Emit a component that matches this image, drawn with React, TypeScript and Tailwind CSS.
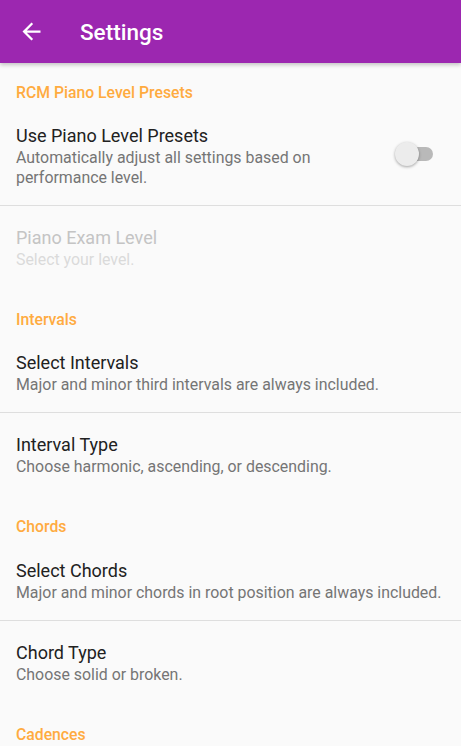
import React from "react";

function Category({ label, first }: { label: string; first?: boolean }) {
  return (
    <div className={`${first ? "pt-[21px] pb-[1px]" : "pt-[24px] pb-[2px]"} pl-[16px]`}>
      <div className="text-[15.75px] leading-[18.5px] font-medium text-[#ffab40]">{label}</div>
    </div>
  );
}

function Item({
  title,
  summary,
  disabled,
  right,
}: {
  title: string;
  summary: React.ReactNode;
  disabled?: boolean;
  right?: React.ReactNode;
}) {
  return (
    <div className="flex items-center min-h-[81px] pl-[16px] pr-[16px] pt-[21px] pb-[17px]">
      <div className="flex-1 min-w-0">
        <div className={`text-[18px] leading-[21px] ${disabled ? "text-[#c4c4c4]" : "text-[#212121]"}`}>{title}</div>
        <div className={`mt-[2px] text-[15.9px] leading-[20px] whitespace-nowrap ${disabled ? "text-[#dadada]" : "text-[#757575]"}`}>{summary}</div>
      </div>
      {right}
    </div>
  );
}

function Divider() {
  return <div className="h-px bg-[#dedede]" />;
}

function Switch() {
  return (
    <div className="relative ml-[16px] mr-[12px] w-[38px] h-[24px] shrink-0 -mt-[4px]">
      <div className="absolute left-[1px] right-0 top-[5px] h-[14px] rounded-full bg-[#b9b9b9]" />
      <div className="absolute left-0 top-0 w-[24px] h-[24px] rounded-full bg-[#ececec] shadow-[0_1px_3px_rgba(0,0,0,0.35)]" />
    </div>
  );
}

export default function App() {
  return (
    <div
      className="w-[461px] h-[746px] overflow-hidden bg-[#fafafa] flex flex-col"
      style={{ fontFamily: "Roboto, 'Noto Sans', sans-serif" }}
    >
      <div className="relative z-10 h-[63px] shrink-0 bg-[#9c27b0] flex items-center pl-[18px] shadow-[0_2px_4px_rgba(0,0,0,0.22)]">
        <svg width="27" height="27" viewBox="0 0 24 24" fill="#ffffff">
          <path d="M20 11H7.83l5.59-5.59L12 4l-8 8 8 8 1.41-1.41L7.83 13H20v-2z" />
        </svg>
        <div className="ml-[35px] mt-[2px] text-[22.5px] font-medium text-white leading-none">Settings</div>
      </div>
      <div className="flex flex-col">
        <Category label="RCM Piano Level Presets" first />
        <Item
          title="Use Piano Level Presets"
          summary={
            <>
              Automatically adjust all settings based on
              <br />
              performance level.
            </>
          }
          right={<Switch />}
        />
        <Divider />
        <Item title="Piano Exam Level" summary="Select your level." disabled />
        <Category label="Intervals" />
        <Item title="Select Intervals" summary="Major and minor third intervals are always included." />
        <Divider />
        <Item title="Interval Type" summary="Choose harmonic, ascending, or descending." />
        <Category label="Chords" />
        <Item title="Select Chords" summary="Major and minor chords in root position are always included." />
        <Divider />
        <Item title="Chord Type" summary="Choose solid or broken." />
        <Category label="Cadences" />
      </div>
    </div>
  );
}
